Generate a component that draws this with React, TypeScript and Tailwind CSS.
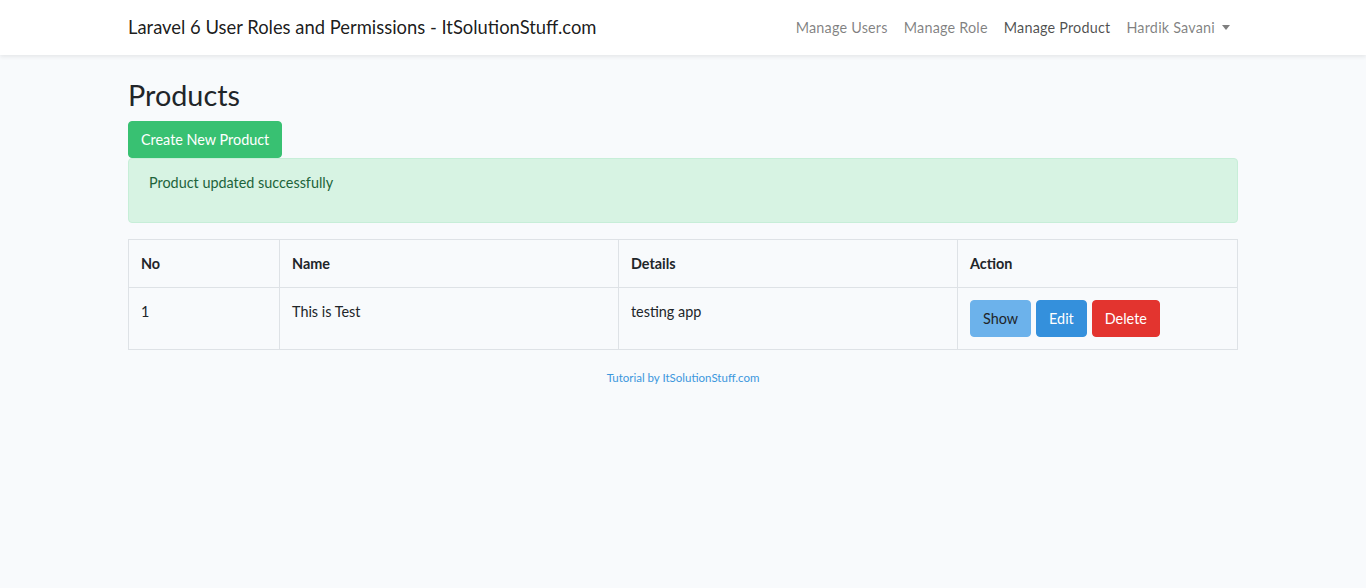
const font = { fontFamily: 'Lato, "Noto Sans", sans-serif' }

function Navbar() {
  return (
    <nav className="bg-white shadow-[0_2px_4px_rgba(0,0,0,0.075)]">
      <div className="mx-auto flex h-[55px] w-[1140px] items-center justify-between px-[15px]">
        <a className="text-[18.4px] text-[rgba(0,0,0,0.9)]">
          Laravel 6 User Roles and Permissions - ItSolutionStuff.com
        </a>
        <ul className="flex items-center text-[14.4px] tracking-[0.2px]">
          <li className="px-2 text-[rgba(0,0,0,0.5)]">Manage Users</li>
          <li className="px-2 text-[rgba(0,0,0,0.5)]">Manage Role</li>
          <li className="px-2 text-[rgba(0,0,0,0.7)]">Manage Product</li>
          <li className="flex items-center px-2 text-[rgba(0,0,0,0.5)]">
            Hardik Savani
            <span className="ml-[7px] inline-block border-x-[4.5px] border-t-[5px] border-x-transparent border-t-[rgba(0,0,0,0.5)]" />
          </li>
        </ul>
      </div>
    </nav>
  )
}

export default function App() {
  return (
    <div
      className="min-h-[588px] bg-[#f8fafc] text-[14.4px] leading-[1.6] text-[#212529]"
      style={font}
    >
      <Navbar />
      <main className="mx-auto w-[1140px] px-[15px] pt-[23px] pb-6">
        <h2 className="mb-[8px] text-[28.8px] leading-[1.2]">Products</h2>
        <button className="rounded-[4px] border border-[#38c172] bg-[#38c172] px-3 py-1.5 text-white">
          Create New Product
        </button>
        <div className="mb-4 rounded-[4px] border border-[#c7eed8] bg-[#d7f3e3] px-5 py-3 text-[#1d643b]">
          <p className="mb-4">Product updated successfully</p>
        </div>
        <table className="mb-4 w-full border-collapse border border-[#dee2e6]">
          <thead>
            <tr className="text-left font-bold">
              <th className="w-[151px] border border-[#dee2e6] p-3">No</th>
              <th className="w-[339px] border border-[#dee2e6] p-3">Name</th>
              <th className="w-[339px] border border-[#dee2e6] p-3">Details</th>
              <th className="border border-[#dee2e6] p-3">Action</th>
            </tr>
          </thead>
          <tbody>
            <tr>
              <td className="border border-[#dee2e6] p-3 align-top">1</td>
              <td className="border border-[#dee2e6] p-3 align-top">This is Test</td>
              <td className="border border-[#dee2e6] p-3 align-top">testing app</td>
              <td className="border border-[#dee2e6] p-3 align-top">
                <div className="flex gap-[5px]">
                  <button className="rounded-[4px] border border-[#6cb2eb] bg-[#6cb2eb] px-3 py-1.5 text-[#212529]">
                    Show
                  </button>
                  <button className="rounded-[4px] border border-[#3490dc] bg-[#3490dc] px-3 py-1.5 text-white">
                    Edit
                  </button>
                  <button className="rounded-[4px] border border-[#e3342f] bg-[#e3342f] px-3 py-1.5 text-white">
                    Delete
                  </button>
                </div>
              </td>
            </tr>
          </tbody>
        </table>
        <p className="pt-[3px] text-center text-[11.5px] text-[#3c97dd]">
          Tutorial by ItSolutionStuff.com
        </p>
      </main>
    </div>
  )
}
